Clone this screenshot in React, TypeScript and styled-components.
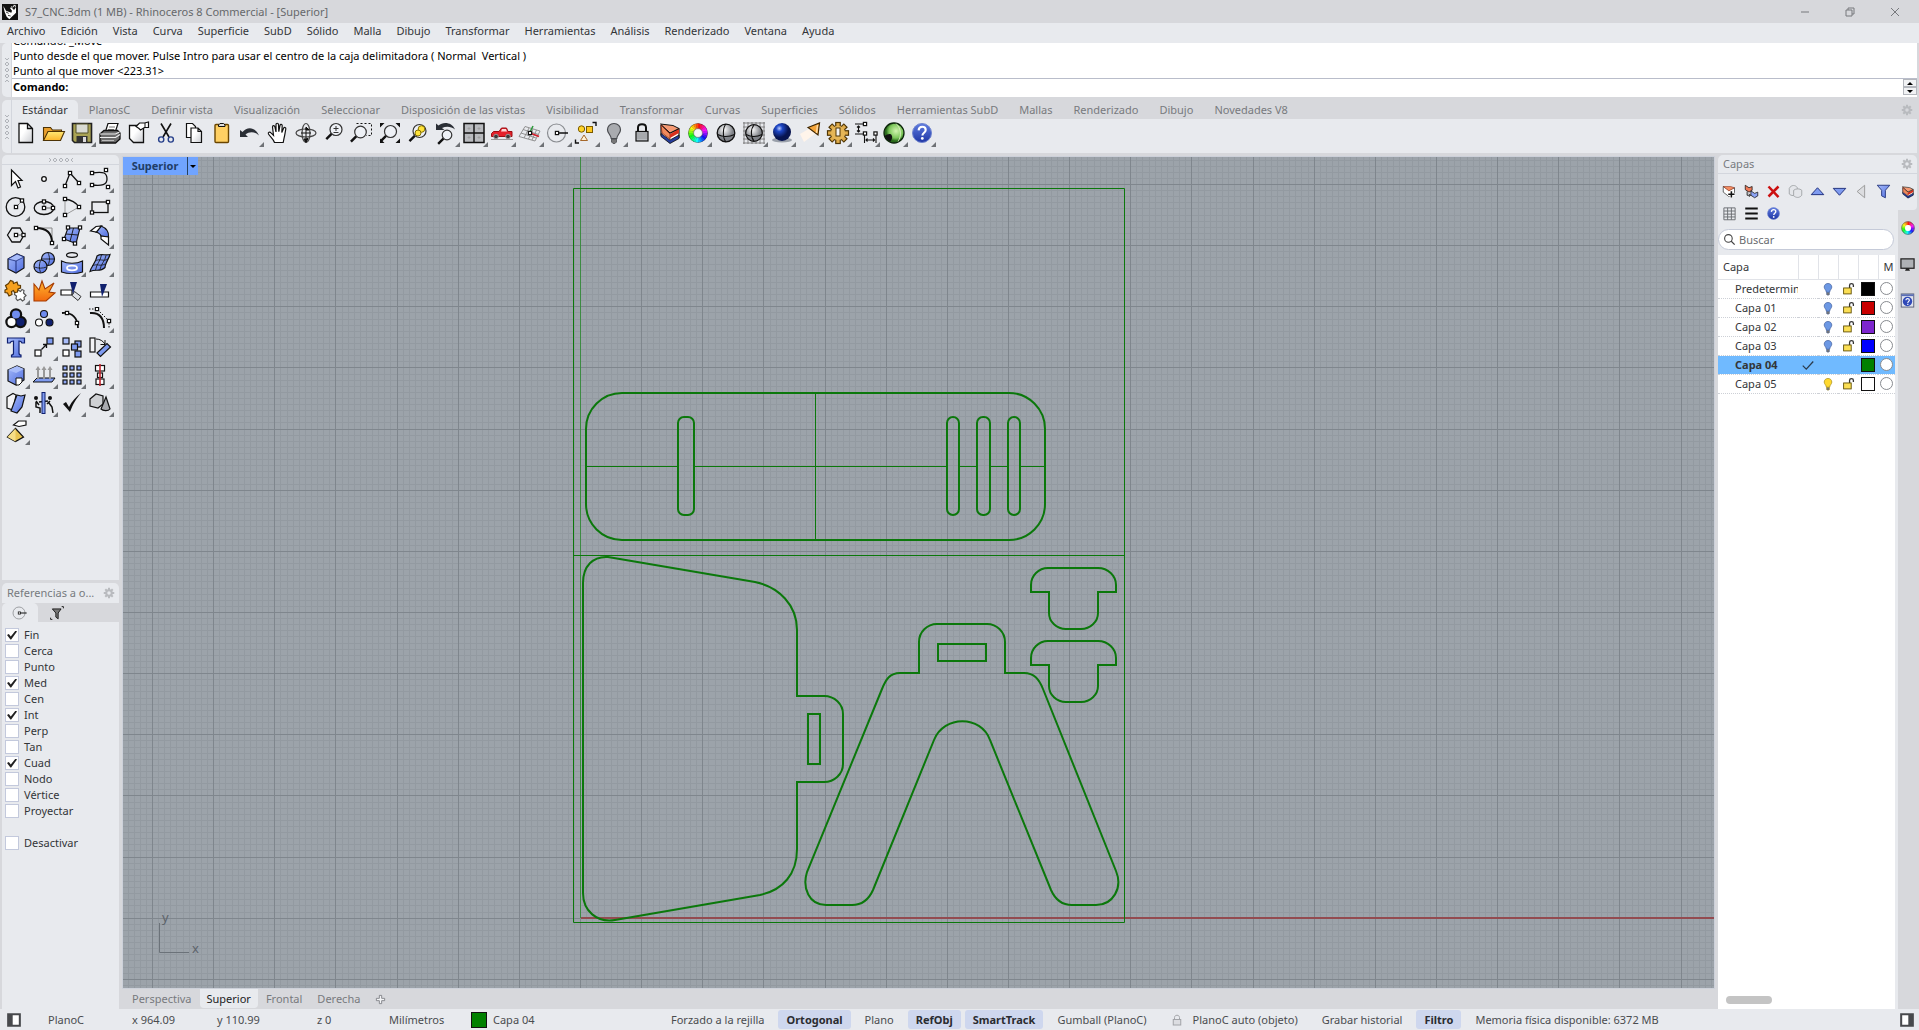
import React, { ReactNode } from "react";
import styled, { createGlobalStyle, css } from "styled-components";

const c = {
  frame: "#d7d8dc",
  panel: "#e8eaee",
  line: "#d3d6dd",
  text: "#333538",
  muted: "#777a7e",
  accent: "#ced7ee",
  sky: "#70baff",
  green: "#0b780b",
};

const Global = createGlobalStyle`
  *, *::before, *::after { box-sizing: border-box; }
  body { margin: 0; background: ${c.frame}; }
  body, button, input, table {
    font-family: "Noto Sans", "Open Sans", sans-serif;
    font-size: 11px;
    line-height: 16px;
    color: ${c.text};
  }
  button { border: 0; padding: 0; background: none; }
`;

/* ---------- icon artwork (24 x 24 boxes) ---------- */

const K = "#111";
const handle = (x: number, y: number) => (
  <rect x={x - 1.6} y={y - 1.6} width="3.2" height="3.2" fill="#fff" stroke={K} strokeWidth="1.2" />
);

const wheel = (r: number, w: number) => {
  const parts: ReactNode[] = [];
  for (let i = 0; i < 24; i++) {
    const a = (i * 15 - 90) * (Math.PI / 180);
    const b = (i * 15 - 73) * (Math.PI / 180);
    parts.push(
      <path
        key={i}
        d={`M${12 + r * Math.cos(a)} ${12 + r * Math.sin(a)}A${r} ${r} 0 0 1 ${12 + r * Math.cos(b)} ${12 + r * Math.sin(b)}`}
        fill="none"
        stroke={`hsl(${360 - i * 15} 95% 52%)`}
        strokeWidth={w}
      />
    );
  }
  return parts;
};

const help = (
  <>
    <circle cx="12" cy="12" r="9.5" fill="url(#gHelp)" stroke="#6f84cf" />
    <path d="M8.6 9.4c.2-2.4 1.7-3.6 3.6-3.6 2 0 3.5 1.2 3.5 3.1 0 2.8-3.3 2.8-3.3 5.6" fill="none" stroke="#fff" strokeWidth="2.1" />
    <circle cx="12.3" cy="17.4" r="1.4" fill="#fff" />
  </>
);

const layers = (
  <>
    <path d="M3 5v9l9 7.500 9-5V8l-9 4z" fill="#fff" stroke={K} strokeWidth="1.200" />
    <path d="M3 12.500l9 6.500 9-5v3.500l-9 5-9-7z" fill="#243c9c" stroke={K} strokeWidth=".8" />
    <path d="M3 4l9 9v5l-8-6z" fill="#f08a5c" stroke="#8c2410" strokeWidth=".8" />
    <path d="M12 13l9-5v4l-9 5z" fill="#d8301c" />
    <path d="M2.500 3l9.500 9 9-4.500-6-3z" fill="#f59a74" stroke={K} strokeWidth="1" />
  </>
);

const gearTeeth = (r: number, w: number, n = 8) =>
  Array.from({ length: n }, (_, i) => (
    <rect key={i} x={12 - w / 2} y={12 - r} width={w} height="5" transform={`rotate(${(i * 360) / n} 12 12)`} />
  ));

const glass = (x: number, y: number, r: number) => (
  <>
    <path d={`M${x - r * 0.7} ${y + r * 0.7}L${x - r * 0.7 - 5.5} ${y + r * 0.7 + 5.5}`} stroke={K} strokeWidth="2.4" />
    <circle cx={x} cy={y} r={r} fill="#eef1f6" stroke="#333" strokeWidth="1.2" />
  </>
);

const bulb = (fill: string, stroke: string) => (
  <>
    <path d="M12 2.5c-4 0-6.5 2.8-6.5 6.2 0 3.6 3.3 4.8 3.7 8.8h5.6c.4-4 3.7-5.200 3.700-8.800 0-3.400-2.500-6.200-6.500-6.200z" fill={fill} stroke={stroke} strokeWidth="1.2" />
    <path d="M9.500 18h5v3l-1.500 1.500h-2L9.500 21z" fill="#777" stroke={stroke} strokeWidth=".8" />
  </>
);

const art: Record<string, ReactNode> = {
  new: (
    <path d="M5 2.500h8.500l5 5v14H5zM13.500 2.500v5h5" fill="url(#gPage)" stroke={K} strokeWidth="1.300" />
  ),
  open: (
    <>
      <path d="M1.500 19.500v-13h7l2 2.500h9v4" fill="#e89e2c" stroke="#4d3305" strokeWidth="1.100" />
      <path d="M1.500 19.500l4.500-9h16.500l-4 9z" fill="url(#gGold)" stroke="#4d3305" strokeWidth="1.100" />
    </>
  ),
  save: (
    <>
      <path d="M2.500 2.500h19v19h-17l-2-2z" fill="#a9a354" stroke="#222" strokeWidth="1.600" />
      <path d="M6 3h12v9H6z" fill="#d9dbd3" stroke="#55522a" />
      <path d="M6.500 15h11v6.500h-11z" fill="#333" />
      <path d="M13 16h3v5h-3z" fill="#ddd" />
    </>
  ),
  print: (
    <>
      <path d="M7 12l3-9.500h10l-3 9.500z" fill="#fff" stroke={K} strokeWidth="1.200" />
      <path d="M11 6h6M10 8.500h6" stroke="#777" />
      <path d="M2 13l4-3.500h13.500L22 12v6l-4.500 4H2z" fill="#6c6c6c" stroke={K} strokeWidth="1.300" />
      <path d="M2 13h15.500l4-2M2 16.500h15.500l4.500-3" stroke="#eee" fill="none" strokeWidth="1.200" />
      <path d="M4 19.500h12" stroke="#bbb" />
    </>
  ),
  exportPage: (
    <>
      <path d="M3.500 4.500h14v17h-10l-4-4z" fill="url(#gPage)" stroke={K} strokeWidth="1.300" />
      <path d="M10 5.500l3.500-3.500h5l4-1v5.500h-4l-4 2.500-1.500-1.500z" fill="#fff" stroke={K} strokeWidth="1.200" />
      <path d="M19 2v4.500" stroke={K} />
    </>
  ),
  cut: (
    <>
      <path d="M7 2.500L15 16M17 2.500L9 16" stroke={K} strokeWidth="1.600" />
      <circle cx="7.200" cy="18.500" r="2.600" fill="none" stroke="#27408b" strokeWidth="1.400" />
      <circle cx="16.800" cy="18.500" r="2.600" fill="none" stroke="#27408b" strokeWidth="1.400" />
    </>
  ),
  copy: (
    <>
      <path d="M4.500 2.500h6l3 3v11h-9z" fill="#fff" stroke={K} strokeWidth="1.200" />
      <path d="M9 7h7l3.500 3.500v11H9zM16 7v3.500h3.500" fill="url(#gPage)" stroke={K} strokeWidth="1.200" />
    </>
  ),
  paste: (
    <>
      <rect x="5" y="3.500" width="13.500" height="18" rx="1" fill="#ffd063" stroke="#6a4500" strokeWidth="1.400" />
      <path d="M8.500 5.500V4L10 2.500h3.500L15 4v1.500z" fill="#ddd" stroke={K} />
    </>
  ),
  undo: (
    <path d="M2 16V9l2.500 2C9 5.500 17 5.500 21 14.500 16.500 10 11 10.500 7.500 13.500L10 16z" fill="#2b2f36" />
  ),
  hand: (
    <path d="M8.500 21.500c-1-3.500-4.500-6-6-8.500-.8-1.800 1.200-2.600 2.500-1.200l2.500 2.500L6.500 6c0-1.700 2-1.700 2.400-.2L10 11V3.600c0-1.800 2.400-1.800 2.500 0l.3 7 1.200-6.200c.4-1.600 2.300-1.200 2.200.4L15.800 11.500l1.800-4.300c.7-1.400 2.500-.7 2.200.8-.8 4-1 6.500-1.600 8.500l-1 5z" fill="#fff" stroke={K} strokeWidth="1.200" />
  ),
  orbit: (
    <>
      <ellipse cx="12" cy="12" rx="10" ry="4" fill="none" stroke="#444" strokeWidth="1.200" />
      <ellipse cx="12" cy="12" rx="4" ry="9.500" fill="none" stroke="#444" strokeWidth="1.200" />
      <path d="M12 7v10M7 12h10M10 18l4-.5-2 4zM12 6l3 3h-3z" stroke={K} fill={K} />
    </>
  ),
  zoomDyn: (
    <>
      {glass(14, 8.500, 6)}
      <path d="M14 5v5M11.500 7.500h5M11.500 11.500h5" stroke="#333" />
    </>
  ),
  zoomWin: (
    <>
      <path d="M6.500 2.500h15v12H16" fill="none" stroke={K} strokeDasharray="2 2" />
      {glass(10.500, 11, 5.800)}
    </>
  ),
  zoomExt: (
    <>
      {glass(12.500, 10.500, 6)}
      <path d="M2 6.500V2h4.500zM22 6.500V2h-4.500zM22 17.500V22h-4.500zM2 17.500V22h4.500z" fill={K} />
    </>
  ),
  zoomSel: (
    <>
      {glass(13.500, 10, 6.500)}
      <circle cx="15.500" cy="8" r="3.300" fill="#ffe33a" stroke="#857000" />
      <circle cx="12" cy="12" r="3" fill="#ffe33a" stroke="#857000" />
    </>
  ),
  undoView: (
    <>
      <path d="M2 9V2.500l2.500 2C9 .5 18 1 21 8.500 17 5 12 5 8 7l2.500 2z" fill="#2b2f36" />
      {glass(13, 14, 4.800)}
    </>
  ),
  fourView: (
    <>
      <rect x="2" y="2.500" width="20" height="19" fill="#b9bbbf" stroke={K} strokeWidth="1.500" />
      <path d="M12 3v18M2 12h20" stroke={K} strokeWidth="1.400" />
      <path d="M7 6v3M5.500 7.500h3M17 6v3M15.500 7.500h3M7 15v3M5.500 16.500h3M17 15v3M15.500 16.500h3" stroke="#999" strokeWidth=".7" />
    </>
  ),
  car: (
    <>
      <path d="M1.500 12.500l2-2H9l2.500-3.500h5L18 10.500h4v5H1.500z" fill="#e4202a" stroke="#9b0d12" />
      <path d="M12 8h4l1 2.500h-6z" fill="#fbd9d9" />
      <circle cx="6" cy="15.500" r="2.300" fill="#3a3a3a" stroke="#999" />
      <circle cx="18" cy="15.500" r="2.300" fill="#3a3a3a" stroke="#999" />
      <path d="M1 18.500h22" stroke="#999" />
    </>
  ),
  cplane: (
    <>
      <path d="M7 5.500l15 4.500-5 10L1 15.500zM11 7l-5 10M15 8l-4.500 10M18.500 9L14 19M5 8.500l15.500 5M3 12l15 5" fill="none" stroke="#888" strokeWidth=".9" />
      <path d="M12 11l3-6" stroke="#2b9a3a" strokeWidth="1.600" />
      <path d="M12 12l9 3.500" stroke="#d2202c" strokeWidth="1.800" />
      {handle(12, 12)}
    </>
  ),
  osnap: (
    <>
      <circle cx="10.500" cy="12" r="9" fill="none" stroke="#8a8d91" strokeWidth="1.200" />
      <path d="M12 12h10" stroke={K} strokeWidth="1.500" />
      {handle(11, 12)}
    </>
  ),
  selection: (
    <>
      <circle cx="7.500" cy="8" r="3.200" fill="#ffd428" stroke="#7a5a00" />
      <rect x="12.500" y="5.500" width="6" height="6" fill="#ffc81e" stroke="#7a5a00" />
      <path d="M10 14l3.500 5.500h-7z" fill="#fff2d8" stroke="#a5672a" />
      <path d="M18.500 1.500H22V5M1.500 18.500V22H5" fill="none" stroke={K} strokeWidth="1.400" />
    </>
  ),
  bulb: bulb("#a9abaf", "#4a4c50"),
  lock: (
    <>
      <path d="M8 11V6.500C8 2 16 2 16 6.500V11" fill="none" stroke={K} strokeWidth="2" />
      <rect x="6" y="10.500" width="12" height="9.500" fill="#b9bcc0" stroke={K} strokeWidth="1.200" />
      <path d="M7 13h10M7 15h10M7 17h10" stroke="#8a8d91" strokeWidth=".8" />
    </>
  ),
  layers,
  wheel: (
    <>
      <circle cx="12" cy="12" r="9.800" fill="#333" />
      {wheel(6.900, 5)}
      <circle cx="12" cy="12" r="4.300" fill="#f4f5f8" stroke="#888" strokeWidth=".5" />
    </>
  ),
  wheelSmall: (
    <>
      {wheel(8, 6)}
      <circle cx="12" cy="12" r="5" fill="#fff" />
      <circle cx="12" cy="12" r="11" fill="none" stroke="#555" />
    </>
  ),
  shaded: (
    <>
      <circle cx="12" cy="12" r="8.800" fill="url(#gGrey)" stroke={K} strokeWidth="1.300" />
      <path d="M3.500 13.500c5 2.500 12 2.500 17 0M12 3c-3.500 4-3.500 14 0 18" fill="none" stroke={K} strokeWidth="1.100" />
    </>
  ),
  shadedGrid: (
    <>
      <path d="M2 1v22M6 1v22M10 1v22M14 1v22M18 1v22M22 1v22M1 2h22M1 6h22M1 10h22M1 14h22M1 18h22M1 22h22" stroke="#777" strokeWidth=".9" />
      <circle cx="12" cy="12" r="8.300" fill="url(#gGrey)" stroke={K} strokeWidth="1.300" />
      <path d="M4 13.500c5 2.500 11 2.500 16 0M12 4c-3.500 4-3.500 12 0 16" fill="none" stroke={K} strokeWidth="1.100" />
    </>
  ),
  render: (
    <>
      <ellipse cx="12" cy="19" rx="10" ry="2.500" fill="#9aa0aa" />
      <circle cx="12" cy="11" r="9" fill="url(#gBlueBall)" />
    </>
  ),
  spot: (
    <>
      <path d="M14 6l4 6-12 9-4-8z" fill="#fff4ea" />
      <path d="M10 6.500L21.500 2l-1.500 12z" fill="#f5a53a" stroke="#3c2500" strokeWidth="1.200" />
      <path d="M19.500 4l-1 8" stroke="#ffd9a0" strokeWidth="1.500" />
    </>
  ),
  gear: (
    <>
      <g fill="#e0ac4a" stroke="#4f3504" strokeWidth="1.200">{gearTeeth(10.500, 4.500)}</g>
      <circle cx="12" cy="12" r="7.200" fill="#e6b656" />
      <rect x="10" y="7" width="4" height="8" fill="#f4f4f4" stroke="#4f3504" />
    </>
  ),
  dims: (
    <>
      <path d="M1 3h9M1 13h9M4.500 5v6M3 6.500L4.500 5 6 6.500M3 9.500L4.500 11 6 9.500" fill="none" stroke={K} strokeWidth="1.100" />
      <path d="M10.500 14v8M22 14v8M12 19h8.500M13.500 17.500L12 19l1.500 1.500M19 17.500l1.500 1.500-1.500 1.500" fill="none" stroke={K} strokeWidth="1.100" />
      {handle(11, 3)}
      {handle(11, 12.500)}
      {handle(21.500, 12.500)}
    </>
  ),
  grass: (
    <>
      <circle cx="12" cy="12" r="10" fill="url(#gGreenBall)" stroke="#0c260a" strokeWidth="1.300" />
      <path d="M2.500 15c3-2 6-3 7-1s1 3-1 6.500c-3-1-5-3-6-5.500z" fill={K} />
      <path d="M14 2.500c5 5 6 12 2 18" fill="none" stroke="#e4f5cd" strokeWidth=".8" />
    </>
  ),
  help,

  pointer: <path d="M7.500 3v15.500l4-4 2.500 6.500 2.500-1-2.500-6.500h4z" fill="#fff" stroke={K} strokeWidth="1.200" />,
  point: <circle cx="12" cy="12" r="2.300" fill="#fff" stroke={K} strokeWidth="1.300" />,
  polyline: (
    <>
      <path d="M5 19L10 6l9 10" fill="none" stroke={K} strokeWidth="1.300" />
      {handle(5, 19)}
      {handle(10, 6)}
      {handle(19, 16)}
    </>
  ),
  curve: (
    <>
      <path d="M4 6c12-2 15 0 15 6s-5 7-15 6" fill="none" stroke={K} strokeWidth="1.300" />
      {handle(4, 6)}
      {handle(4, 18)}
      {handle(18, 3)}
      {handle(20, 20)}
    </>
  ),
  circle: (
    <>
      <circle cx="11.500" cy="12" r="9.300" fill="none" stroke={K} strokeWidth="1.300" />
      <path d="M12 12l6-6" stroke="#555" strokeDasharray="2 1" />
      {handle(12, 12)}
      {handle(18, 5.500)}
    </>
  ),
  ellipse: (
    <>
      <ellipse cx="12" cy="13" rx="9.800" ry="6.500" fill="none" stroke={K} strokeWidth="1.300" />
      <path d="M12 13V6.500M12 13h9" stroke="#666" />
      {handle(12, 13)}
      {handle(12, 6.500)}
      {handle(21, 13)}
    </>
  ),
  arc: (
    <>
      <path d="M5 4v16l14-8" fill="none" stroke="#999" />
      <path d="M5 4c8 1 12 5 14 8" fill="none" stroke={K} strokeWidth="1.300" />
      {handle(5, 4)}
      {handle(19, 12)}
      {handle(5, 20)}
    </>
  ),
  rect: (
    <>
      <rect x="4" y="7" width="16" height="10.500" fill="none" stroke={K} strokeWidth="1.300" />
      {handle(20, 7)}
      {handle(4, 17.500)}
    </>
  ),
  polygon: (
    <>
      <path d="M3.500 12L8 5h8l4 7-4 7H8z" fill="none" stroke={K} strokeWidth="1.300" />
      <path d="M12 12h7.500" stroke="#555" />
      {handle(12, 12)}
      {handle(19.500, 12)}
    </>
  ),
  fillet: (
    <>
      <path d="M4 5h16v15" fill="none" stroke="#888" />
      <path d="M4 5c10 0 16 4 16 15" fill="none" stroke={K} strokeWidth="2" />
      {handle(4, 5)}
      {handle(20, 20)}
    </>
  ),
  surface: (
    <>
      <path d="M8 5h12l-4 15.500L4 16z" fill="url(#gBlue)" stroke={K} strokeWidth="1.100" />
      <path d="M13.500 5l-3.500 13.500M6 11l12 1" stroke={K} strokeWidth=".9" />
      {handle(8, 4.500)}
      {handle(20, 4.500)}
      {handle(4, 16)}
      {handle(15, 20.500)}
    </>
  ),
  sweep: (
    <>
      <path d="M8 9l5-6c5 2 8 6 7.500 11L13 13c-.5-2-2-3-5-4z" fill="url(#gBlue)" stroke={K} strokeWidth="1.200" />
      <path d="M2.500 8l5.500-4.500 5.500-.5L8.500 9zM13 13l7.500 1v8L13 16z" fill="#fff" stroke={K} strokeWidth="1.200" />
    </>
  ),
  box: (
    <>
      <path d="M4 8l9-5 7 3v11l-8 5-8-4z" fill="url(#gBlue)" stroke={K} strokeWidth="1.200" />
      <path d="M4 8l9-5 7 3-8 4z" fill="#a9bdfa" stroke="#1c2c7a" strokeWidth=".8" />
      <path d="M12 10v12" stroke="#1c2c7a" />
    </>
  ),
  boolean: (
    <>
      <circle cx="16" cy="8" r="6.500" fill="url(#gBlue)" stroke={K} strokeWidth="1.200" />
      <circle cx="8.500" cy="15.500" r="6.500" fill="url(#gBlue)" stroke={K} strokeWidth="1.200" />
      <path d="M2.500 16c4 1.500 8 1.500 12 0M8.500 9.500c-1.500 4-1.500 8 0 12M16 2c2 4 2 8 0 12M10 8h12" fill="none" stroke={K} strokeWidth=".8" />
    </>
  ),
  project: (
    <>
      <ellipse cx="12" cy="4" rx="5.500" ry="2.300" fill="none" stroke={K} strokeWidth="1.200" />
      <path d="M1.500 10c6 3 15 3 21 0v11c-6 2-15 2-21 0z" fill="url(#gBlue)" stroke={K} strokeWidth="1.200" />
      <ellipse cx="12" cy="17" rx="5" ry="2.300" fill="none" stroke="#fff" strokeWidth="1.800" />
    </>
  ),
  patch: (
    <>
      <path d="M9 5c4-3 8 0 13-1.500-1 4-5 9-5 13-5 5-9 1-15 4 1-5 6-9 7-15.500z" fill="url(#gBlue)" stroke={K} strokeWidth="1.200" />
      <path d="M13.500 4c-1 6-5 9-6 15M18 4.500c-1 6-5 8-6 14M7 10c5-3 8 1 13-2M4 15c5-3 8 1 13-2" fill="none" stroke={K} strokeWidth=".8" />
    </>
  ),
  puzzle: (
    <>
      <path d="M11 13l3-2 2.500 1.500 1.500-2 2 1-.5 2.500 2.500 2.500-2 2 .5 2-2 1.500-2-2-3 1.500-1.500-2 .5-2.500-2-1.500z" fill="#fff" stroke="#555" strokeWidth="1.200" />
      <path d="M4.500 4.500L6.500 1.500l2.500 1 .5 2 3.500-1.500 1 3 2.500.5v2.500l-2.500 1-.5 3-3 .5-1-2-2 1 .5 3-3 1.500L3.500 14l-2.500-.5v-2.500l2-1-1.500-3.500z" fill="#f6a11f" stroke="#603a00" strokeWidth="1.200" />
    </>
  ),
  explode: (
    <path d="M2 22V5l5 6 3-9 3 8 9-6-5 9 6 1-9 8z" fill="url(#gFire)" stroke="#a63a00" strokeWidth="1.100" />
  ),
  trim: (
    <>
      <path d="M1 11h11v5H1z" fill="#fff" stroke={K} strokeWidth="1.200" />
      <path d="M14.500 12.500l6.500 5-3 4-6-5z" fill="#dfe2e8" stroke="#333" />
      <path d="M10 3h7l-4 12z" fill="#10206e" />
    </>
  ),
  split: (
    <>
      <path d="M2.500 13h18v5h-18z" fill="#fff" stroke={K} strokeWidth="1.200" />
      <path d="M12 5h7l-5 13z" fill="#10206e" />
    </>
  ),
  group: (
    <>
      <g stroke={K} strokeWidth="3.500">
        <circle cx="12" cy="7.500" r="4.500" fill="#6f8cf0" />
        <circle cx="7.500" cy="15" r="4.500" fill="#fff" />
        <circle cx="16.500" cy="15" r="4.500" fill="#10206e" />
      </g>
      <circle cx="12" cy="7.500" r="4" fill="#6f8cf0" />
      <circle cx="7.500" cy="15" r="4" fill="#fff" />
      <circle cx="16.500" cy="15" r="4" fill="#10206e" />
    </>
  ),
  ungroup: (
    <g stroke={K} strokeWidth="1.100">
      <circle cx="12" cy="7" r="3.500" fill="#6f8cf0" />
      <circle cx="7" cy="15.500" r="3.500" fill="#fff" />
      <circle cx="17.500" cy="15.500" r="3.500" fill="#10206e" />
    </g>
  ),
  editPts: (
    <>
      <path d="M2 6c10-1 16 5 16 15" fill="none" stroke={K} strokeWidth="1.800" />
      {handle(7, 6)}
      {handle(17, 16)}
    </>
  ),
  ctrlPts: (
    <>
      <path d="M2 6c10-1 14 6 14 15" fill="none" stroke={K} strokeWidth="2" />
      <path d="M1 2h8l12 12v8" fill="none" stroke={K} strokeDasharray="1.500 1.500" />
      {handle(9, 2)}
      {handle(21, 14)}
    </>
  ),
  text: (
    <path d="M3.500 3h17v5H18c-.5-1.500-1-2-3-2v12c0 1.500.5 2 2 2v2H7.500v-2c1.500 0 2-.5 2-2V6c-2 0-3 .5-3.500 2H3.500z" fill="url(#gBlue)" stroke="#10206e" strokeWidth="1.200" />
  ),
  move: (
    <>
      <rect x="3" y="15" width="6" height="6" fill="#fff" stroke={K} strokeWidth="1.200" />
      <rect x="15" y="3" width="6" height="6" fill="#7f9bf0" stroke={K} strokeWidth="1.200" />
      <path d="M9.500 14.500L14 10M11 9.500h3.500V13" fill="none" stroke={K} strokeWidth="1.300" />
    </>
  ),
  copyObj: (
    <g stroke={K} strokeWidth="1.200">
      <rect x="3" y="3" width="6" height="6" fill="#a9bdfa" />
      <rect x="3" y="15" width="6" height="6" fill="#fff" />
      <rect x="15" y="6" width="6" height="6" fill="#7f9bf0" />
      <rect x="11.500" y="9" width="6" height="6" fill="#7f9bf0" />
      <rect x="15" y="16" width="6" height="6" fill="#7f9bf0" />
    </g>
  ),
  rotate: (
    <>
      <rect x="2" y="3" width="5" height="14" fill="#f4f4f6" stroke={K} strokeWidth="1.200" />
      <path d="M8 4c4 0 7 2 9 5M17 5v4.500h-4.500" fill="none" stroke={K} />
      <path d="M9 18L19 8.500l3.500 3.500-10 9.500z" fill="#7f9bf0" stroke={K} strokeWidth="1.200" />
    </>
  ),
  solid: (
    <>
      <path d="M4 7l9-4 7 3v11l-8 5-8-4z" fill="url(#gBlue)" stroke={K} strokeWidth="1.200" />
      <path d="M4 7l9-4 7 3-8 4z" fill="#a9bdfa" />
      <path d="M12 15h6v4l-3 3h-3z" fill="#fff" stroke={K} />
    </>
  ),
  extrude: (
    <>
      <path d="M5 15h18l-3 4H1z" fill="#7f9bf0" stroke={K} />
      <path d="M6 16V5M12 16V5M18 16V5" stroke="#999" strokeWidth="2" />
      <path d="M3.500 7L6 3l2.500 4zM9.500 7L12 3l2.500 4zM15.500 7L18 3l2.500 4z" fill="#999" />
    </>
  ),
  array: (
    <g fill="#8fa7f3" stroke={K} strokeWidth="1.200">
      {[3, 10, 17].map((y) => [3, 10, 17].map((x) => <rect key={`${x}${y}`} x={x} y={y} width="4" height="4" />))}
    </g>
  ),
  align: (
    <>
      <g fill="#fff" stroke={K} strokeWidth="1.200">
        <rect x="7.500" y="2.500" width="9" height="5.500" />
        <rect x="9.500" y="10" width="5" height="4.500" />
        <rect x="8" y="16" width="8" height="5.500" />
      </g>
      <path d="M12 1v22" stroke="#c0222c" strokeWidth="1.600" />
    </>
  ),
  mesh: (
    <>
      <path d="M3 6l6-3.500 3 1.500-3 15-6-2z" fill="#f4f4f6" stroke={K} strokeWidth="1.200" />
      <path d="M13 4l4 1 4-1-3 12-5 6-6-2z" fill="url(#gBlue)" stroke={K} strokeWidth="1.200" />
    </>
  ),
  figures: (
    <>
      <circle cx="4" cy="7" r="2" fill={K} />
      <circle cx="18" cy="7" r="2" fill={K} />
      <path d="M4 10l3 4M4 11v5l4 1v5M18 10l-3 3M17 12l3 4 1 6M7 11l9-1" fill="none" stroke={K} strokeWidth="1.500" />
      <rect x="10" y="1.500" width="3" height="21" fill="#7f9bf0" stroke="#10206e" />
    </>
  ),
  check: <path d="M3 13l3-2 3 5c3-6 7-10 12-14-5 6-8 11-11 19z" fill={K} />,
  solids: (
    <>
      <path d="M2 8l6-5 7 2v8l-5 4-8-2z" fill="#cfd1d4" stroke={K} strokeWidth="1.200" />
      <path d="M18 6l4 12c-2 2.500-7 2-9 0z" fill="#a9abaf" stroke={K} strokeWidth="1.200" />
    </>
  ),
  tag: (
    <>
      <path d="M3.500 18l8-8.500 8 8.500-8 4.500z" fill="#e8c453" stroke={K} strokeWidth="1.200" />
      <path d="M3.500 18l8-8.500v13z" fill="#f7de86" />
      <path d="M9.500 6l5-4h7.500v4l-7 1.500z" fill="#fff" stroke={K} strokeWidth="1.200" />
    </>
  ),

  layerNew: (
    <>
      <path d="M2 4l9 6 9-4v9l-9 5-9-7z" fill="#fff" stroke={K} />
      <path d="M2 4l9 7 9-5-6-2z" fill="#f38c62" stroke="#7a2410" strokeWidth=".8" />
      <path d="M15 11v11M9.500 16.500h11" stroke="#fff" strokeWidth="5" />
      <path d="M15 11.500v10M10 16.500h10" stroke={K} strokeWidth="2.500" />
    </>
  ),
  sublayer: (
    <>
      <path d="M2 2l6 4 5-2v6l-5 3-6-4z" fill="#f07a58" stroke={K} strokeWidth="1.200" />
      <path d="M11 11l6 4 5-2v6l-5 3-6-4z" fill="#8ca4f5" stroke={K} strokeWidth="1.200" />
      <path d="M5 12v6h5M8 15.500l2.500 2.500L8 20.500" fill="none" stroke={K} strokeWidth="1.400" />
    </>
  ),
  remove: <path d="M4 4l16 17M20 4L4 20" stroke="#cc1010" strokeWidth="4" />,
  duplicate: (
    <g fill="#e4e6ea" stroke="#a2a5a9" strokeWidth="1.500">
      <path d="M2 7c3-6 10-6 13-1v9c-4 5-10 4-13 1z" />
      <path d="M9 10c4-3 10-3 13 0v8c-4 5-9 4-13 1z" />
    </g>
  ),
  up: <path d="M2 17L12 6l10 11z" fill="#7f9bf0" stroke="#1c2c7a" strokeWidth="1.500" />,
  down: <path d="M2 7l10 11L22 7z" fill="#7f9bf0" stroke="#1c2c7a" strokeWidth="1.500" />,
  left: <path d="M17 2v20L5 12z" fill="#dcdde0" stroke="#999" strokeWidth="1.500" />,
  filter: <path d="M2 2h20l-7 8v12l-6-3v-9z" fill="url(#gBlue)" stroke="#26377f" strokeWidth="1.500" />,
  grid: <path d="M3 3h18v19H3zM3 8h18M3 13h18M3 17.500h18M9 3v19M15 3v19" fill="none" stroke="#6a6d71" strokeWidth="1.500" />,
  lines: <path d="M2 4h20M2 12h20M2 20h20" stroke={K} strokeWidth="3" />,
  search: (
    <>
      <circle cx="10" cy="10" r="7" fill="none" stroke="#444" strokeWidth="2" />
      <path d="M15 15l6.500 6.500" stroke="#444" strokeWidth="2.500" />
    </>
  ),
  monitor: (
    <>
      <rect x="1.500" y="3" width="21" height="15" fill="#aeb1b5" stroke="#222" strokeWidth="2" />
      <path d="M8 22h8l-2-4h-4z" fill="#222" />
    </>
  ),
  helpPanel: (
    <>
      <rect x="2" y="1.500" width="20" height="21" fill="#dfe3ee" stroke="#5b627a" strokeWidth="1.500" />
      <path d="M2 2h20v3H2z" fill="#5b6fb5" />
      <circle cx="12" cy="13.500" r="7.500" fill="#2f49b8" />
      <path d="M9.500 11.500c0-3.500 5.500-3 5.500 0 0 2-2.500 2-2.500 4.500M12.500 17v2" fill="none" stroke="#fff" strokeWidth="1.800" />
    </>
  ),
  cog: (
    <>
      <g fill="#b9bbbf">{gearTeeth(10.500, 4)}</g>
      <circle cx="12" cy="12" r="5.500" fill="none" stroke="#b9bbbf" strokeWidth="4" />
    </>
  ),
  bulbBlue: bulb("#6c98e4", "#3d5c9c"),
  bulbYellow: bulb("#ffd92e", "#a58a10"),
  unlocked: (
    <>
      <path d="M14 11V6c0-4 7-4 7 0v3" fill="none" stroke="#333" strokeWidth="2.400" />
      <rect x="3" y="11" width="14" height="11" fill="#fbdf55" stroke="#5c4b00" strokeWidth="1.600" />
    </>
  ),
  tick: <path d="M3 13l6 6L21 6" fill="none" stroke="#2b3b4c" strokeWidth="2.200" />,
  funnel: (
    <>
      <path d="M4 5h15l-5 7v10l-4-3v-7z" fill="#777" stroke={K} strokeWidth="1.500" />
      <path d="M20 1h3v3M1 20v3h3" fill="none" stroke={K} strokeWidth="1.500" />
    </>
  ),
  lockGrey: (
    <>
      <path d="M7 11V7c0-6 10-6 10 0v4" fill="none" stroke="#a2a4a8" strokeWidth="2" />
      <rect x="4.500" y="11" width="15" height="11" fill="#dcdde1" stroke="#a2a4a8" strokeWidth="2" />
    </>
  ),
  paneLeft: <path d="M2 2h20v20H2z M8 2v20M4.500 2v20" fill="#fff" stroke="#47494c" strokeWidth="3.500" />,
  paneRight: <path d="M2 2h20v20H2z M16 2v20M19.500 2v20" fill="#fff" stroke="#47494c" strokeWidth="3.500" />,
  plus: <path d="M9.500 3h5v6.500H21v5h-6.500V21h-5v-6.500H3v-5h6.500z" fill="#f3f4f6" stroke="#777a7e" strokeWidth="1.800" />,
  minimize: <path d="M4 12h16" stroke="#77797d" strokeWidth="2" />,
  restore: <path d="M4 8h12v12H4zM8 8V4h12v12h-4" fill="none" stroke="#77797d" strokeWidth="2" />,
  close: <path d="M4 4l16 16M20 4L4 20" stroke="#77797d" strokeWidth="2" />,
  logo: (
    <>
      <rect width="24" height="24" fill={K} />
      <path d="M2 3l4 7 5 2 3 1 1-3-3-4 2-1 4 4 3-4v8l-3 3-4 4-3 3-4-4-3-7z" fill="#fff" />
      <path d="M6 12l4 2M9 17l4 1" stroke={K} strokeWidth="1.200" fill="none" />
      <path d="M14 3l2 2 3-3M17 2h3v3" stroke="#fff" fill="none" strokeWidth="1.200" />
    </>
  ),
};

const Icon = ({ name, size = 24 }: { name: string; size?: number }) => (
  <svg width={size} height={size} viewBox="0 0 24 24" aria-hidden="true">
    {art[name]}
  </svg>
);

/* ---------- shell ---------- */

const Shell = styled.div`
  display: flex;
  flex-direction: column;
  height: 100vh;
  min-width: 1200px;
  overflow: hidden;
`;

const TitleBar = styled.header`
  display: flex;
  align-items: center;
  height: 23px;
  flex: none;
  padding: 0 5px 0 2px;
  gap: 7px;
`;

const Title = styled.h1`
  flex: 1;
  margin: 0;
  font-size: 11px;
  font-weight: 400;
  color: #66686b;
`;

const WindowButton = styled.button`
  display: grid;
  place-items: center;
  width: 38px;
  height: 20px;
`;

const MenuBar = styled.nav`
  display: flex;
  align-items: flex-start;
  gap: 15px;
  height: 20px;
  flex: none;
  padding-left: 7px;
  background: ${c.panel};
`;

const MenuItem = styled.button`
  height: 16px;
`;

const Grip = styled.div<{ $row?: boolean }>`
  flex: none;
  background: radial-gradient(circle, #e4e6ea 1px, #b0b3b9 1px, #b0b3b9 2px, transparent 2px) center / 6px 6px;
  ${(p) => (p.$row ? css`width: 24px; height: 6px;` : css`width: 6px; height: 24px;`)}
`;

const GripBar = styled.div`
  display: flex;
  align-items: center;
  justify-content: center;
  flex: none;
  width: 10px;
  border-right: 1px solid ${c.line};
  border-radius: 5px 0 0 5px;
  background: ${c.panel};
`;

const CommandArea = styled.section`
  display: flex;
  flex: none;
  height: 54px;
  padding: 0 2px;
`;

const CommandBody = styled.div`
  display: flex;
  flex: 1;
  flex-direction: column;
  background: #fff;
  color: #000;
`;

const History = styled.div`
  display: flex;
  flex-direction: column;
  justify-content: flex-end;
  height: 36px;
  padding-left: 1px;
  overflow: hidden;
  border-bottom: 1px solid #b9bdca;
`;

const HistoryLine = styled.div`
  flex: none;
  line-height: 15px;
  color: #000;
  white-space: pre;
`;

const Prompt = styled.div`
  display: flex;
  flex: 1;
  align-items: flex-start;
  padding-left: 1px;
`;

const PromptLabel = styled.label`
  font-weight: 700;
  color: #000;
`;

const PromptInput = styled.input`
  flex: 1;
  height: 16px;
  margin-left: 4px;
  border: 0;
  padding: 0;
  outline: 0;
  background: transparent;
`;

const Spinner = styled.div`
  display: flex;
  flex-direction: column;
  width: 14px;
`;

const SpinButton = styled.button`
  display: grid;
  place-items: center;
  height: 8px;
  border: 1px solid #b4b7bd;
  background: #f1f2f4;
`;

const Caret = styled.span<{ $up?: boolean }>`
  border: 3px solid transparent;
  ${(p) => (p.$up ? css`border-top-width: 0; border-bottom-color: #000;` : css`border-bottom-width: 0; border-top-color: #000;`)}
`;

/* ---------- toolbar ---------- */

const Ribbon = styled.section`
  display: flex;
  flex: none;
  height: 53px;
  margin: 3px 2px 2px;
`;

const RibbonBody = styled.div`
  display: flex;
  flex: 1;
  flex-direction: column;
  background: ${c.panel};
`;

const TabStrip = styled.div`
  display: flex;
  align-items: stretch;
  gap: 1px;
  height: 19px;
  flex: none;
  background: ${c.frame};
`;

const Tab = styled.button<{ $on?: boolean }>`
  padding: 0 10px;
  color: ${(p) => (p.$on ? c.text : c.muted)};
  background: ${(p) => (p.$on ? c.panel : "transparent")};
  border-radius: 0 5px 0 0;
`;

const CogButton = styled.button`
  display: grid;
  place-items: center;
  width: 20px;
  margin-left: auto;
`;

const ToolRow = styled.div`
  display: flex;
`;

const Tool = styled.button<{ $more?: boolean }>`
  position: relative;
  display: grid;
  place-items: center;
  width: 28px;
  height: 28px;
  ${(p) =>
    p.$more &&
    css`
      &::after {
        content: "";
        position: absolute;
        right: 0;
        bottom: 0;
        width: 5px;
        height: 5px;
        background: #6f7276;
        clip-path: polygon(100% 0, 100% 100%, 0 100%);
      }
    `}
`;

/* ---------- main area ---------- */

const Main = styled.main`
  display: flex;
  flex: 1;
  min-height: 0;
  padding-left: 2px;
`;

const LeftDock = styled.aside`
  display: flex;
  flex-direction: column;
  flex: none;
  width: 117px;
  gap: 3px;
`;

const ToolPanel = styled.section`
  flex: 1 1 425px;
  max-height: 425px;
  border-radius: 5px 5px 0 0;
  background: ${c.panel};
`;

const PanelGrip = styled.div`
  display: flex;
  align-items: center;
  justify-content: center;
  height: 10px;
  border-bottom: 1px solid ${c.line};
`;

const ToolGrid = styled.div`
  display: grid;
  grid-template-columns: repeat(4, 28px);
`;

const SnapPanel = styled.section`
  display: flex;
  flex: 1;
  flex-direction: column;
  border-radius: 5px 5px 0 0;
  background: ${c.panel};
`;

const PanelHeader = styled.div<{ $ruled?: boolean }>`
  display: flex;
  align-items: center;
  height: ${(p) => (p.$ruled ? 19 : 20)}px;
  padding-left: 5px;
  border-bottom: ${(p) => (p.$ruled ? `1px solid ${c.line}` : 0)};
`;

const PanelTitle = styled.h2`
  margin: 0;
  font-size: 11px;
  font-weight: 400;
  color: ${c.muted};
  white-space: nowrap;
`;

const SnapTab = styled.button<{ $on?: boolean }>`
  display: grid;
  place-items: center;
  width: 36px;
  border-radius: 5px 5px 0 0;
  background: ${(p) => (p.$on ? c.panel : "transparent")};
`;

const SnapList = styled.div`
  display: flex;
  flex-direction: column;
  padding: 5px 0 0 3px;
`;

const SnapOption = styled.label<{ $apart?: boolean }>`
  display: flex;
  align-items: center;
  gap: 5px;
  height: 16px;
  margin-top: ${(p) => (p.$apart ? 16 : 0)}px;
`;

const Check = styled.input`
  appearance: none;
  display: grid;
  place-items: center;
  width: 14px;
  height: 14px;
  margin: 0;
  border: 1px solid #c3c9dc;
  background: #fff;
  &:checked::after {
    content: "";
    width: 10px;
    height: 9px;
    background: #222;
    clip-path: polygon(0 50%, 18% 38%, 38% 66%, 86% 0, 100% 10%, 42% 100%, 34% 100%);
  }
`;

const Center = styled.div`
  display: flex;
  flex: 1;
  flex-direction: column;
  min-width: 0;
`;

const ViewFrame = styled.div`
  position: relative;
  flex: 1;
  min-height: 0;
  margin: 2px 4px 0;
  outline: 1px solid #cdd1da;
`;

const Canvas = styled.svg`
  display: block;
  width: 100%;
  height: 100%;
  background: #9ca3aa;
`;

const AxisLabel = styled.text`
  font-family: "Noto Sans", sans-serif;
  font-size: 13px;
  fill: #5d646b;
`;

const ViewTitle = styled.div`
  position: absolute;
  top: 0;
  left: 0;
  display: flex;
  height: 18px;
  background: #70a4ff;
`;

const ViewName = styled.button`
  width: 65px;
  border-right: 1px solid #26415f;
  font-weight: 700;
  line-height: 14px;
  color: #1f3d66;
`;

const ViewMenu = styled.button`
  display: grid;
  place-items: center;
  width: 10px;
`;

const ViewTabs = styled.div`
  display: flex;
  gap: 1px;
  height: 21px;
  flex: none;
  padding: 0 0 1px 6px;
`;

const ViewTab = styled.button<{ $on?: boolean }>`
  padding: 2px 7px 0;
  border-radius: 0 0 4px 4px;
  color: ${(p) => (p.$on ? "#222" : c.muted)};
  background: ${(p) => (p.$on ? c.panel : "transparent")};
`;

const PlusTab = styled.button`
  display: grid;
  place-items: center;
  width: 24px;
  padding-top: 2px;
`;

/* ---------- right dock ---------- */

const RightDock = styled.aside`
  display: flex;
  flex: none;
  flex-direction: column;
  width: 201px;
  padding-right: 2px;
`;

const DockCap = styled.div`
  border-radius: 5px 5px 0 0;
  background: ${c.panel};
`;

const DockBody = styled.div`
  display: flex;
  flex: 1;
  min-height: 0;
`;

const LayerPanel = styled.section`
  display: flex;
  flex: 1;
  flex-direction: column;
  min-width: 0;
  padding-right: 3px;
  background: ${c.panel};
`;

const LayerTools = styled.div`
  display: flex;
  flex-wrap: wrap;
  padding-top: 6px;
`;

const LayerTool = styled.button`
  display: grid;
  place-items: center;
  width: 22px;
  height: 22px;
`;

const SearchBox = styled.label`
  display: flex;
  align-items: center;
  gap: 3px;
  height: 21px;
  margin: 5px 1px 5px 0;
  padding-left: 4px;
  border: 1px solid #c5cad8;
  border-radius: 11px;
  background: #fff;
`;

const SearchInput = styled.input`
  min-width: 0;
  flex: 1;
  border: 0;
  padding: 0;
  outline: 0;
  background: transparent;
  &::placeholder { color: #6a6c70; opacity: 1; }
`;

const TableBox = styled.div`
  display: flex;
  flex: 1;
  flex-direction: column;
  justify-content: space-between;
  overflow: hidden;
  background: #fff;
`;

const LayerTable = styled.table`
  width: 100%;
  table-layout: fixed;
  border-collapse: collapse;
`;

const Head = styled.th<{ $w?: number }>`
  width: ${(p) => (p.$w ? `${p.$w}px` : "auto")};
  height: 24px;
  padding: 0 0 0 5px;
  border-right: 1px solid #e1e3e8;
  border-bottom: 1px solid #e1e3e8;
  font-weight: 400;
  text-align: left;
  &:last-child { border-right: 0; }
`;

const LayerRow = styled.tr<{ $on?: boolean }>`
  background: ${(p) => (p.$on ? c.sky : "transparent")};
  font-weight: ${(p) => (p.$on ? 700 : 400)};
`;

const Cell = styled.td<{ $name?: boolean }>`
  height: 19px;
  padding: 0 0 0 ${(p) => (p.$name ? 17 : 0)}px;
  border-bottom: 1px dotted #cdd0d6;
  overflow: hidden;
  text-align: ${(p) => (p.$name ? "left" : "center")};
  line-height: 14px;
  white-space: nowrap;
  svg { display: block; margin: 0 auto; }
`;

const Swatch = styled.span<{ $color: string }>`
  display: block;
  width: 14px;
  height: 14px;
  margin: 0 auto;
  border: 1px solid #111;
  background: ${(p) => p.$color};
`;

const Ring = styled.span`
  display: block;
  width: 13px;
  height: 13px;
  margin: 0 auto;
  border: 1px solid #888b90;
  border-radius: 50%;
  background: #fff;
`;

const Thumb = styled.div`
  width: 46px;
  height: 8px;
  margin: 0 0 5px 8px;
  border-radius: 4px;
  background: #c4c4c4;
`;

const SideTabs = styled.div`
  display: flex;
  flex-direction: column;
  flex: none;
  width: 19px;
  background: ${c.frame};
`;

const SideTab = styled.button<{ $on?: boolean }>`
  display: grid;
  place-items: center;
  height: 36px;
  border-radius: 0 0 4px 0;
  background: ${(p) => (p.$on ? c.panel : "transparent")};
`;

/* ---------- status bar ---------- */

const StatusBar = styled.footer`
  display: flex;
  align-items: center;
  height: 21px;
  flex: none;
  padding: 0 5px 0 7px;
  background: ${c.panel};
`;

const Pane = styled.button`
  display: grid;
  place-items: center;
  width: 14px;
`;

const Readout = styled.span<{ $w: number }>`
  width: ${(p) => p.$w}px;
  flex: none;
  color: #4a4c4f;
  white-space: nowrap;
`;

const LayerReadout = styled.button`
  display: flex;
  align-items: center;
  gap: 6px;
  width: 190px;
  color: #4a4c4f;
`;

const Chip = styled.span`
  width: 16px;
  height: 16px;
  border: 1px solid #111;
  background: #008000;
`;

const Toggle = styled.button<{ $on?: boolean }>`
  display: flex;
  align-items: center;
  gap: 10px;
  height: 19px;
  padding: 0 ${(p) => (p.$on ? 8 : 10)}px;
  margin-right: 4px;
  border-radius: 3px;
  font-weight: ${(p) => (p.$on ? 700 : 400)};
  color: ${(p) => (p.$on ? "#2a2c30" : "#4a4c4f")};
  background: ${(p) => (p.$on ? c.accent : "transparent")};
  white-space: nowrap;
`;

const Spacer = styled.div`
  flex: 1;
`;

/* ---------- data ---------- */

const menus = ["Archivo", "Edición", "Vista", "Curva", "Superficie", "SubD", "Sólido", "Malla", "Dibujo", "Transformar", "Herramientas", "Análisis", "Renderizado", "Ventana", "Ayuda"];

const tabs = ["Estándar", "PlanosC", "Definir vista", "Visualización", "Seleccionar", "Disposición de las vistas", "Visibilidad", "Transformar", "Curvas", "Superficies", "Sólidos", "Herramientas SubD", "Mallas", "Renderizado", "Dibujo", "Novedades V8"];

const tools = ["new", "open", "save+", "print", "exportPage", "cut", "copy", "paste", "undo+", "hand", "orbit", "zoomDyn", "zoomWin", "zoomExt", "zoomSel", "undoView+", "fourView+", "car+", "cplane+", "osnap+", "selection+", "bulb+", "lock+", "layers+", "wheel+", "shaded", "shadedGrid+", "render+", "spot+", "gear+", "dims+", "grass+", "help+"];

const sideTools = [
  "pointer", "point+", "polyline+", "curve+",
  "circle+", "ellipse+", "arc+", "rect+",
  "polygon+", "fillet+", "surface+", "sweep+",
  "box+", "boolean+", "project+", "patch+",
  "puzzle+", "explode", "trim", "split",
  "group+", "ungroup", "editPts", "ctrlPts+",
  "text", "move+", "copyObj", "rotate",
  "solid+", "extrude+", "array+", "align+",
  "mesh+", "figures+", "check+", "solids+",
  "tag+",
];

const snaps: [string, boolean][] = [
  ["Fin", true], ["Cerca", false], ["Punto", false], ["Med", true], ["Cen", false], ["Int", true],
  ["Perp", false], ["Tan", false], ["Cuad", true], ["Nodo", false], ["Vértice", false], ["Proyectar", false],
  ["Desactivar", false],
];

const layerTools = ["layerNew", "sublayer", "remove", "duplicate", "up", "down", "left", "filter", "grid", "lines", "help"];

const layerRows = [
  { name: "Predeterminada", color: "#000000", bulb: "bulbBlue" },
  { name: "Capa 01", color: "#c80000", bulb: "bulbBlue" },
  { name: "Capa 02", color: "#7d26cd", bulb: "bulbBlue" },
  { name: "Capa 03", color: "#0000ff", bulb: "bulbBlue" },
  { name: "Capa 04", color: "#008000", current: true },
  { name: "Capa 05", color: "#ffffff", bulb: "bulbYellow" },
];

/* ---------- model view ---------- */

const ORIGIN = { x: 458, y: 760.7 };
const STEP = 6.114;

const gridPath = (major: boolean) => {
  let d = "";
  for (let i = -80; i <= 560; i++) {
    if ((i % 10 === 0) !== major) continue;
    const x = Math.round(ORIGIN.x + i * STEP) - 0.5;
    d += `M${x} 0V3000`;
  }
  for (let i = -130; i <= 300; i++) {
    if ((i % 10 === 0) !== major) continue;
    const y = Math.round(ORIGIN.y + i * STEP) + 0.5;
    d += `M0 ${y}H4000`;
  }
  return d;
};

const slot = (x: number, w: number) => <rect x={x} y="260" width={w} height="98" rx="6" />;

const tee = (y: number) => (
  <path d={`M925 ${y}h50a18 17 0 0 1 18 17v7h-18v21a17 16 0 0 1-17 16h-15a17 16 0 0 1-17-16v-21h-18v-7a17 17 0 0 1 17-17z`} />
);

const ModelView = () => (
  <Canvas aria-label="Vista superior">
    <defs>
      <linearGradient id="gPage" x1="0" y1="0" x2="1" y2="1"><stop offset=".4" stopColor="#fff" /><stop offset="1" stopColor="#c9cbd0" /></linearGradient>
      <linearGradient id="gGold" x1="0" y1="0" x2="0" y2="1"><stop stopColor="#ffe873" /><stop offset="1" stopColor="#fbb52c" /></linearGradient>
      <linearGradient id="gBlue" x1="0" y1="0" x2="1" y2="1"><stop stopColor="#a5baf9" /><stop offset="1" stopColor="#4f6de0" /></linearGradient>
      <linearGradient id="gFire" x1="0" y1="0" x2="0" y2="1"><stop stopColor="#ffb62e" /><stop offset="1" stopColor="#f26a10" /></linearGradient>
      <linearGradient id="gHelp" x1="0" y1="0" x2="0" y2="1"><stop stopColor="#5f7ce0" /><stop offset="1" stopColor="#1f36a4" /></linearGradient>
      <radialGradient id="gGrey" cx=".4" cy=".3"><stop stopColor="#fff" /><stop offset="1" stopColor="#808389" /></radialGradient>
      <radialGradient id="gBlueBall" cx=".35" cy=".3"><stop stopColor="#b9cbff" /><stop offset=".35" stopColor="#1f48c8" /><stop offset="1" stopColor="#071450" /></radialGradient>
      <radialGradient id="gGreenBall" cx=".6" cy=".4"><stop stopColor="#d2f4b0" /><stop offset=".7" stopColor="#7cc65a" /><stop offset="1" stopColor="#2a6a1c" /></radialGradient>
    </defs>
    <path d={gridPath(false)} stroke="#939aa1" />
    <path d={gridPath(true)} stroke="#7f868d" />
    <path d="M458 761H4000" stroke="#934b50" strokeWidth="2" />
    <path d="M457.500 0V761" stroke="#3c8b42" strokeWidth="1" />
    <g fill="none" stroke={c.green}>
      <path d="M450.500 31.500h551v734h-551zM450.500 398.500h551" />
      <path d="M692.500 236v147M463 309.500h92M571 309.500h253M836 309.500h18M867 309.500h18M897 309.500h25" />
    </g>
    <g fill="none" stroke={c.green} strokeWidth="2">
      <rect x="463" y="236" width="459" height="147" rx="36" />
      {slot(555, 16)}
      {slot(824, 12)}
      {slot(854, 13)}
      {slot(885, 12)}
      <path d="M485 400L632 425C656 430 674 448 674 473V539h27a19 18 0 0 1 19 18v50a19 18 0 0 1-19 18h-27v67c0 25-14 41-37 46L492 763c-18 3-32-9-32-27V426c0-17 10-27 25-26z" />
      <rect x="685" y="557" width="12" height="50" />
      <path d="M796 516v-31a18 18 0 0 1 18-18h50a18 18 0 0 1 18 18v31h19c10 0 15 6 19 16L993 714c7 17-3 34-20 34h-24c-11 0-17-6-21-15L867 583c-9-25-46-25-56 0L750 733c-4 9-10 15-21 15h-26c-17 0-24-17-19-33L759 532c4-10 8-16 18-16z" />
      <rect x="815" y="487" width="48" height="17" />
      {tee(411)}
      {tee(484)}
    </g>
    <path d="M36.500 766v29.500H66" fill="none" stroke="#6b7279" />
    <AxisLabel x="39" y="765">y</AxisLabel>
    <AxisLabel x="69" y="796">x</AxisLabel>
  </Canvas>
);

const split = (id: string): [string, boolean] => [id.replace("+", ""), id.endsWith("+")];

const ToolButtons = ({ ids }: { ids: string[] }) => (
  <>
    {ids.map((id) => {
      const [name, more] = split(id);
      return (
        <Tool key={id} $more={more} aria-label={name}>
          <Icon name={name} size={24} />
        </Tool>
      );
    })}
  </>
);

export default function App() {
  return (
    <Shell>
      <Global />
      <TitleBar>
        <Icon name="logo" size={16} />
        <Title>S7_CNC.3dm (1 MB) - Rhinoceros 8 Commercial - [Superior]</Title>
        <WindowButton aria-label="Minimizar"><Icon name="minimize" size={12} /></WindowButton>
        <WindowButton aria-label="Restaurar"><Icon name="restore" size={12} /></WindowButton>
        <WindowButton aria-label="Cerrar"><Icon name="close" size={12} /></WindowButton>
      </TitleBar>
      <MenuBar>
        {menus.map((m) => <MenuItem key={m}>{m}</MenuItem>)}
      </MenuBar>
      <CommandArea>
        <GripBar><Grip /></GripBar>
        <CommandBody>
          <History>
            <HistoryLine>Comando: _Move</HistoryLine>
            <HistoryLine>Punto desde el que mover. Pulse Intro para usar el centro de la caja delimitadora ( Normal  Vertical )</HistoryLine>
            <HistoryLine>Punto al que mover &lt;223.31&gt;</HistoryLine>
          </History>
          <Prompt>
            <PromptLabel htmlFor="prompt">Comando:</PromptLabel>
            <PromptInput id="prompt" />
            <Spinner>
              <SpinButton aria-label="Anterior"><Caret $up /></SpinButton>
              <SpinButton aria-label="Siguiente"><Caret /></SpinButton>
            </Spinner>
          </Prompt>
        </CommandBody>
      </CommandArea>
      <Ribbon>
        <GripBar><Grip /></GripBar>
        <RibbonBody>
          <TabStrip>
            {tabs.map((t, i) => <Tab key={t} $on={i === 0}>{t}</Tab>)}
            <CogButton aria-label="Opciones"><Icon name="cog" size={12} /></CogButton>
          </TabStrip>
          <ToolRow><ToolButtons ids={tools} /></ToolRow>
        </RibbonBody>
      </Ribbon>
      <Main>
        <LeftDock>
          <ToolPanel>
            <PanelGrip><Grip $row /></PanelGrip>
            <ToolGrid><ToolButtons ids={sideTools} /></ToolGrid>
          </ToolPanel>
          <SnapPanel>
            <PanelHeader>
              <PanelTitle>Referencias a o...</PanelTitle>
              <CogButton aria-label="Opciones"><Icon name="cog" size={12} /></CogButton>
            </PanelHeader>
            <TabStrip>
              <SnapTab $on aria-label="Referencias"><Icon name="osnap" size={16} /></SnapTab>
              <SnapTab aria-label="Filtros"><Icon name="funnel" size={14} /></SnapTab>
            </TabStrip>
            <SnapList>
              {snaps.map(([name, on]) => (
                <SnapOption key={name} $apart={name === "Desactivar"}>
                  <Check type="checkbox" defaultChecked={on} />
                  {name}
                </SnapOption>
              ))}
            </SnapList>
          </SnapPanel>
        </LeftDock>
        <Center>
          <ViewFrame>
            <ModelView />
            <ViewTitle>
              <ViewName>Superior</ViewName>
              <ViewMenu aria-label="Menú de vista"><Caret /></ViewMenu>
            </ViewTitle>
          </ViewFrame>
          <ViewTabs>
            <ViewTab>Perspectiva</ViewTab>
            <ViewTab $on>Superior</ViewTab>
            <ViewTab>Frontal</ViewTab>
            <ViewTab>Derecha</ViewTab>
            <PlusTab aria-label="Nueva vista"><Icon name="plus" size={11} /></PlusTab>
          </ViewTabs>
        </Center>
        <RightDock>
          <DockCap>
            <PanelHeader $ruled>
              <PanelTitle>Capas</PanelTitle>
              <CogButton aria-label="Opciones"><Icon name="cog" size={12} /></CogButton>
            </PanelHeader>
          </DockCap>
          <DockBody>
            <LayerPanel>
              <LayerTools>
                {layerTools.map((n) => (
                  <LayerTool key={n} aria-label={n}><Icon name={n} size={15} /></LayerTool>
                ))}
              </LayerTools>
              <SearchBox>
                <Icon name="search" size={13} />
                <SearchInput placeholder="Buscar" aria-label="Buscar" />
              </SearchBox>
              <TableBox>
                <LayerTable>
                  <thead>
                    <tr>
                      <Head>Capa</Head>
                      <Head $w={20} />
                      <Head $w={20} />
                      <Head $w={20} />
                      <Head $w={20} />
                      <Head $w={17}>M</Head>
                    </tr>
                  </thead>
                  <tbody>
                    {layerRows.map((r) => (
                      <LayerRow key={r.name} $on={r.current}>
                        <Cell $name>{r.name}</Cell>
                        <Cell>{r.current && <Icon name="tick" size={14} />}</Cell>
                        <Cell>{r.bulb && <Icon name={r.bulb} size={14} />}</Cell>
                        <Cell>{r.bulb && <Icon name="unlocked" size={13} />}</Cell>
                        <Cell><Swatch $color={r.color} /></Cell>
                        <Cell><Ring /></Cell>
                      </LayerRow>
                    ))}
                  </tbody>
                </LayerTable>
                <Thumb />
              </TableBox>
            </LayerPanel>
            <SideTabs>
              <SideTab $on aria-label="Capas"><Icon name="layers" size={14} /></SideTab>
              <SideTab aria-label="Propiedades"><Icon name="wheelSmall" size={14} /></SideTab>
              <SideTab aria-label="Visualización"><Icon name="monitor" size={15} /></SideTab>
              <SideTab aria-label="Ayuda"><Icon name="helpPanel" size={15} /></SideTab>
            </SideTabs>
          </DockBody>
        </RightDock>
      </Main>
      <StatusBar>
        <Readout $w={41}><Pane aria-label="Panel izquierdo"><Icon name="paneLeft" size={14} /></Pane></Readout>
        <Readout $w={84}>PlanoC</Readout>
        <Readout $w={85}>x 964.09</Readout>
        <Readout $w={100}>y 110.99</Readout>
        <Readout $w={72}>z 0</Readout>
        <Readout $w={82}>Milímetros</Readout>
        <LayerReadout><Chip />Capa 04</LayerReadout>
        <Toggle>Forzado a la rejilla</Toggle>
        <Toggle $on>Ortogonal</Toggle>
        <Toggle>Plano</Toggle>
        <Toggle $on>RefObj</Toggle>
        <Toggle $on>SmartTrack</Toggle>
        <Toggle>Gumball (PlanoC)</Toggle>
        <Toggle><Icon name="lockGrey" size={12} />PlanoC auto (objeto)</Toggle>
        <Toggle>Grabar historial</Toggle>
        <Toggle $on>Filtro</Toggle>
        <Toggle>Memoria física disponible: 6372 MB</Toggle>
        <Spacer />
        <Pane aria-label="Panel derecho"><Icon name="paneRight" size={14} /></Pane>
      </StatusBar>
    </Shell>
  );
}
